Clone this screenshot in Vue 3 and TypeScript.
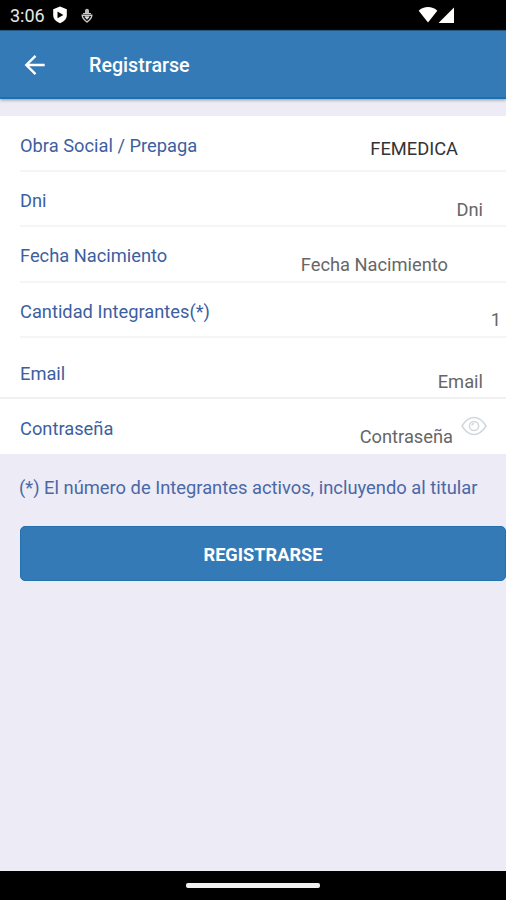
<script setup lang="ts">
interface Field {
  id: string
  label: string
  value: string
  reveal?: boolean
}

const fields: Field[] = [
  { id: 'plan', label: 'Obra Social / Prepaga', value: 'FEMEDICA' },
  { id: 'dni', label: 'Dni', value: 'Dni' },
  { id: 'birth', label: 'Fecha Nacimiento', value: 'Fecha Nacimiento' },
  { id: 'members', label: 'Cantidad Integrantes(*)', value: '1' },
  { id: 'email', label: 'Email', value: 'Email' },
  { id: 'password', label: 'Contraseña', value: 'Contraseña', reveal: true },
]
</script>

<template>
  <div class="screen">
    <div class="status">
      <span class="clock">3:06</span>
      <svg class="shield" width="16" height="18" viewBox="0 0 16 18">
        <path d="M8 .6 14.800 3.200V9c0 4-2.800 6.700-6.800 8.200C4 15.700 1.200 13 1.200 9V3.200z" fill="#fff" />
        <path d="M5.500 5.500 11.400 8.900 5.500 12.300z" fill="#000" />
      </svg>
      <svg class="debug" width="12" height="15" viewBox="0 0 12 15">
        <path d="M6 .8a2 2 0 0 1 2 2v2.700H4V2.800a2 2 0 0 1 2-2z" fill="#bbb" />
        <path d="M1.200 7.200h9.600c0 3.200-2.500 5-4.800 6.800C3.700 12.200 1.200 10.400 1.200 7.200z" fill="none" stroke="#ccc" stroke-width="1.400" />
        <path d="M2 5.500h8M3.800 8.800h4.400L6 11.300z" fill="#eee" stroke="#ccc" />
      </svg>
      <svg class="signal" width="38" height="18" viewBox="0 0 38 18">
        <path d="M.7 4.800C5.500-.2 14.500-.2 19.300 4.800L10 16.500z" fill="#fff" />
        <path d="M36 1.500V17H20.500z" fill="#fff" />
      </svg>
    </div>
    <header class="bar">
      <svg class="back" width="22" height="22" viewBox="0 0 22 22">
        <path d="M20.700 11H2.700M11.500 1.800 2.300 11l9.200 9.200" fill="none" stroke="#fff" stroke-width="2.400" />
      </svg>
      <h1 class="title">Registrarse</h1>
    </header>
    <main class="content">
      <section class="form">
        <div v-for="f in fields" :key="f.id" class="row" :class="f.id">
          <span class="label">{{ f.label }}</span>
          <span class="value">{{ f.value }}</span>
          <svg v-if="f.reveal" class="eye" width="26" height="20" viewBox="0 0 26 20">
            <path d="M1 10C4.500 4.300 8.500 1.500 13 1.500S21.500 4.300 25 10c-3.500 5.700-7.500 8.500-12 8.500S4.500 15.700 1 10z" />
            <circle cx="13" cy="10" r="4.600" />
            <path d="M10.800 9.500c.2-1.200 1-1.900 2.200-2" />
          </svg>
        </div>
      </section>
      <p class="note">(*) El número de Integrantes activos, incluyendo al titular</p>
      <button class="submit" type="button">REGISTRARSE</button>
    </main>
    <footer class="nav"><span class="handle"></span></footer>
  </div>
</template>

<style>
body {
  margin: 0;
}
</style>

<style scoped>
.screen {
  width: 506px;
  height: 900px;
  display: flex;
  flex-direction: column;
  overflow: hidden;
  background: #edebf5;
  font-family: Roboto, "Liberation Sans", sans-serif;
}
.status {
  height: 30px;
  flex: none;
  box-sizing: border-box;
  display: flex;
  align-items: center;
  padding: 1px 50px 0 10px;
  background: #000;
  color: #e8e8e8;
}
.clock {
  width: 42px;
  font-size: 18px;
  line-height: 28px;
}
.shield {
  margin-top: -1px;
}
.debug {
  margin: -1px 0 0 13px;
}
.signal {
  margin: -1px 0 0 auto;
}
.bar {
  height: 69px;
  flex: none;
  box-sizing: border-box;
  display: flex;
  align-items: center;
  padding-left: 24px;
  background: #347ab6;
  border-top: 1px solid #24577f;
  border-bottom: 2px solid #1c6fb1;
  box-shadow: 0 1px 3px rgba(70, 80, 70, 0.55);
}
.back {
  margin-top: 1px;
}
.title {
  margin: 4px 0 0 43px;
  color: #fff;
  font-size: 19.700px;
  font-weight: 500;
  line-height: 24px;
}
.content {
  flex: 1;
  padding-top: 17px;
}
.form {
  background: #fff;
}
.row {
  height: 55.500px;
  box-sizing: border-box;
  display: flex;
  align-items: flex-start;
  margin-left: 20px;
  padding: 18px 23px 0 0;
  border-bottom: 2px solid #f5f5f6;
  font-size: 18.300px;
  line-height: 22px;
}
.label {
  color: #3c5f9f;
}
.value {
  margin: 9px 0 0 auto;
  color: #666;
}
.plan {
  padding-top: 19px;
  padding-right: 48px;
}
.plan .value {
  margin-top: 3px;
  color: #333;
}
.birth {
  padding-right: 58px;
}
.members {
  padding-right: 5px;
}
.members .value {
  margin-top: 8px;
}
.email {
  height: 61px;
  margin-left: 0;
  padding: 25px 23px 0 20px;
  border-color: #f0f0f1;
}
.email .value {
  margin-top: 8px;
}
.password {
  height: 55px;
  border-bottom: 0;
  padding-top: 19px;
  padding-right: 19px;
}
.password .value {
  margin-top: 8px;
}
.eye {
  margin: -2px 0 0 8px;
  fill: none;
  stroke: #cfd8df;
  stroke-width: 1.500;
}
.note {
  margin: 23px 0 0 19px;
  color: #4a68a6;
  font-size: 18.330px;
  line-height: 22px;
  white-space: nowrap;
}
.submit {
  display: block;
  width: 486px;
  height: 55px;
  margin: 27px 0 0 20px;
  padding: 2px 0 0;
  border: 1px solid #2371ad;
  border-radius: 5px;
  background: #347ab6;
  color: #fff;
  font-family: inherit;
  font-size: 18.200px;
  font-weight: 700;
}
.nav {
  height: 29px;
  flex: none;
  box-sizing: border-box;
  display: flex;
  justify-content: center;
  padding-top: 12px;
  background: #000;
}
.handle {
  width: 134px;
  height: 5px;
  border-radius: 2px;
  background: #f0f0f0;
}
</style>
